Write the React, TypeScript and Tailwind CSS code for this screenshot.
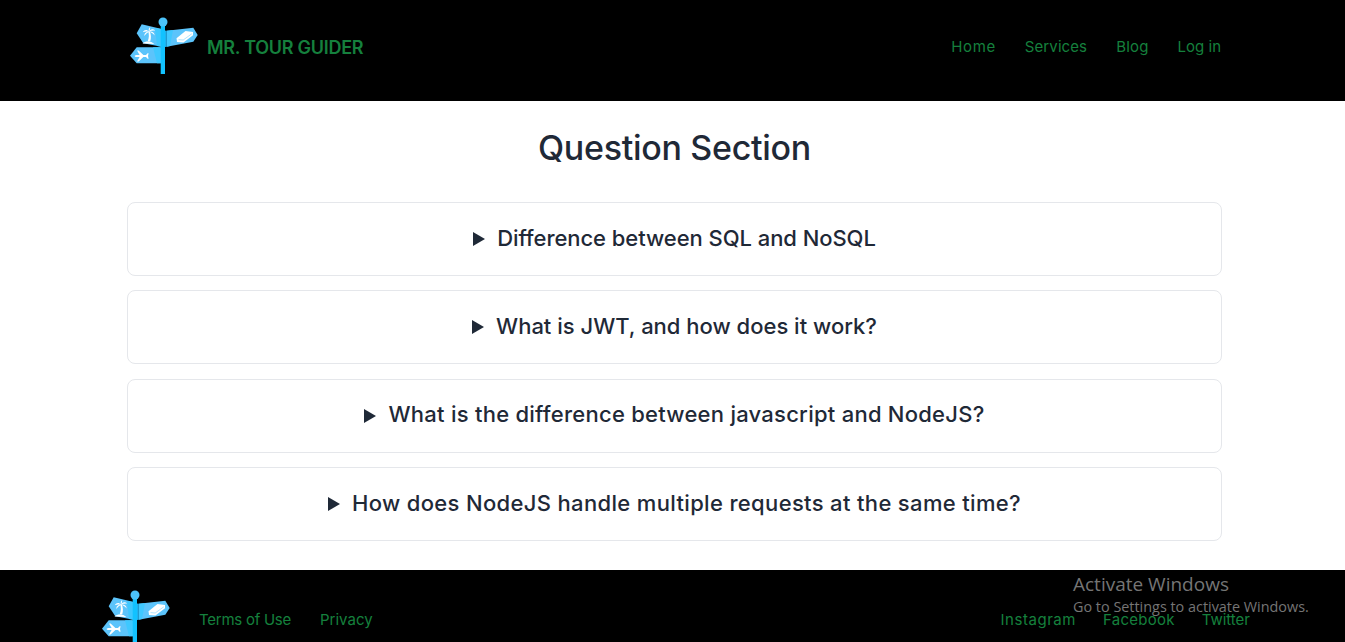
const questions = [
  { text: "Difference between SQL and NoSQL", tracking: "tracking-[-0.06px]" },
  { text: "What is JWT, and how does it work?", tracking: "tracking-normal" },
  { text: "What is the difference between javascript and NodeJS?", tracking: "tracking-[0.25px]" },
  { text: "How does NodeJS handle multiple requests at the same time?", tracking: "tracking-[0.34px]" },
];

function Logo() {
  return (
    <svg viewBox="0 0 72 60" className="h-[60px] w-[72px] shrink-0">
      <path d="M14.7 9.3 34.7 14V31.7L16.3 28.3 9.7 18.3Z" fill="#5cc4fb" />
      <path d="M39.7 15.7 66.3 12.7 70.7 20 66.3 26.7 39.7 31.7Z" fill="#5cc4fb" />
      <path d="M9.7 32.3H33.7V48.3H9.7L3 40.7Z" fill="#5cc4fb" />
      <path d="M28 13 34 14V31.7L30 31Z" fill="#3fc8ff" />
      <path d="M26 32.3H34V48.3H30Z" fill="#3fc8ff" />
      <path d="M39.7 15.7 46 15 43 31 39.7 31.7Z" fill="#3fc8ff" />
      <path d="M33.7 11H38V59H33.7Z" fill="#12c2ff" />
      <path d="M38 15.4 39.7 15.7V31.7L38 32Z" fill="#1fb2f0" />
      <circle cx="36" cy="7" r="4.5" fill="#4cc3fa" />
      {/* palm */}
      <path d="M21.2 16.5C22.2 19.5 22.2 23 20.6 26.4H23.2C24.4 23 24 19.5 22.8 16.5Z" fill="#fff" />
      <path d="M15.5 28.4C18.5 25.8 24 25.8 27.4 29Z" fill="#fff" />
      <path d="M22 16.8C20 14 17.4 14.4 15.8 17.2 18 16.2 20 16.2 22 16.8Z" fill="#fff" />
      <path d="M22 16.6C19.4 16.6 17.2 18.2 17.4 21 19 18.8 20.6 17.8 22 16.6Z" fill="#fff" />
      <path d="M22 16.8C23.4 13.6 26 13.4 28.2 15.6 26 15.2 24 15.6 22 16.8Z" fill="#fff" />
      <path d="M22 16.6C25 16 27.6 17.6 27.6 20.4 26 18.6 24 17.6 22 16.6Z" fill="#fff" />
      <path d="M22 16.8C21.2 14.8 21.8 13 23.2 12 23.2 13.8 22.8 15.4 22 16.8Z" fill="#fff" />
      {/* book */}
      <path d="M49.5 23.2 58.5 16 66 17V20.2L56.5 27.4 50 27Z" fill="#fff" />
      <path d="M51.5 24.6 56.2 25 64.8 18.8" fill="none" stroke="#8fd8fc" strokeWidth="0.7" />
      {/* plane */}
      <path
        d="M7.5 41C8 40 9 40 10.5 40H12.6L10 35.5H11.6L16.4 40H19L20.6 38.2H21.6L21 41 21.6 43.8H20.6L19 42H16.4L11.6 46.5H10L12.6 42H10.5C9 42 8 42 7.5 41Z"
        fill="#fff"
      />
    </svg>
  );
}

export default function App() {
  return (
    <div className="relative flex h-screen flex-col overflow-hidden bg-white font-['Inter',sans-serif]">
      <nav className="flex h-[101px] shrink-0 items-center justify-between bg-black pl-[127px] pr-[124px] text-[#15803d]">
        <div className="flex items-center gap-2 pb-[12px]">
          <Logo />
          <span className="pt-[6px] text-[18px] font-semibold tracking-[-0.27px]">MR. TOUR GUIDER</span>
        </div>
        <div className="flex gap-[29px] pb-[6px] text-[15px]">
          <a className="tracking-[0.6px]">Home</a>
          <a className="tracking-[0.1px]">Services</a>
          <a className="tracking-[0.2px]">Blog</a>
          <a>Log in</a>
        </div>
      </nav>

      <main className="flex-1 px-[127px] pr-[123px]">
        <h1 className="mt-[24px] text-center text-[34px] leading-[46px] font-medium tracking-[-0.3px] text-[#1f2937]">
          Question Section
        </h1>
        <div className="mt-[31px] flex flex-col gap-[14.4px]">
          {questions.map((q) => (
            <div
              key={q.text}
              className={`flex h-[74px] items-center justify-center gap-[12px] rounded-lg border border-gray-200 text-[22px] font-medium text-[#1f2937] ${q.tracking}`}
            >
              <span className="h-0 w-0 border-y-[7px] border-l-[12px] border-y-transparent border-l-[#1f2937]" />
              <span className="pb-[2px]">{q.text}</span>
            </div>
          ))}
        </div>
      </main>

      <footer className="flex h-[72px] shrink-0 justify-between bg-black pl-[99px] pr-[95px] text-[15px] text-[#15803d]">
        <div className="flex gap-[28px] pt-[18px]">
          <Logo />
          <div className="flex gap-[29px] pt-[21px]">
            <a className="tracking-[-0.25px]">Terms of Use</a>
            <a>Privacy</a>
          </div>
        </div>
        <div className="flex gap-[27px] pt-[39px]">
          <a className="tracking-[0.55px]">Instagram</a>
          <a className="tracking-[0.25px]">Facebook</a>
          <a>Twitter</a>
        </div>
      </footer>

      <div className="absolute left-[1073px] top-[572px] font-['Open_Sans',sans-serif] text-[#757575]">
        <div className="text-[19px] leading-[25px]">Activate Windows</div>
        <div className="text-[14.4px] leading-[19px]">Go to Settings to activate Windows.</div>
      </div>
    </div>
  );
}
